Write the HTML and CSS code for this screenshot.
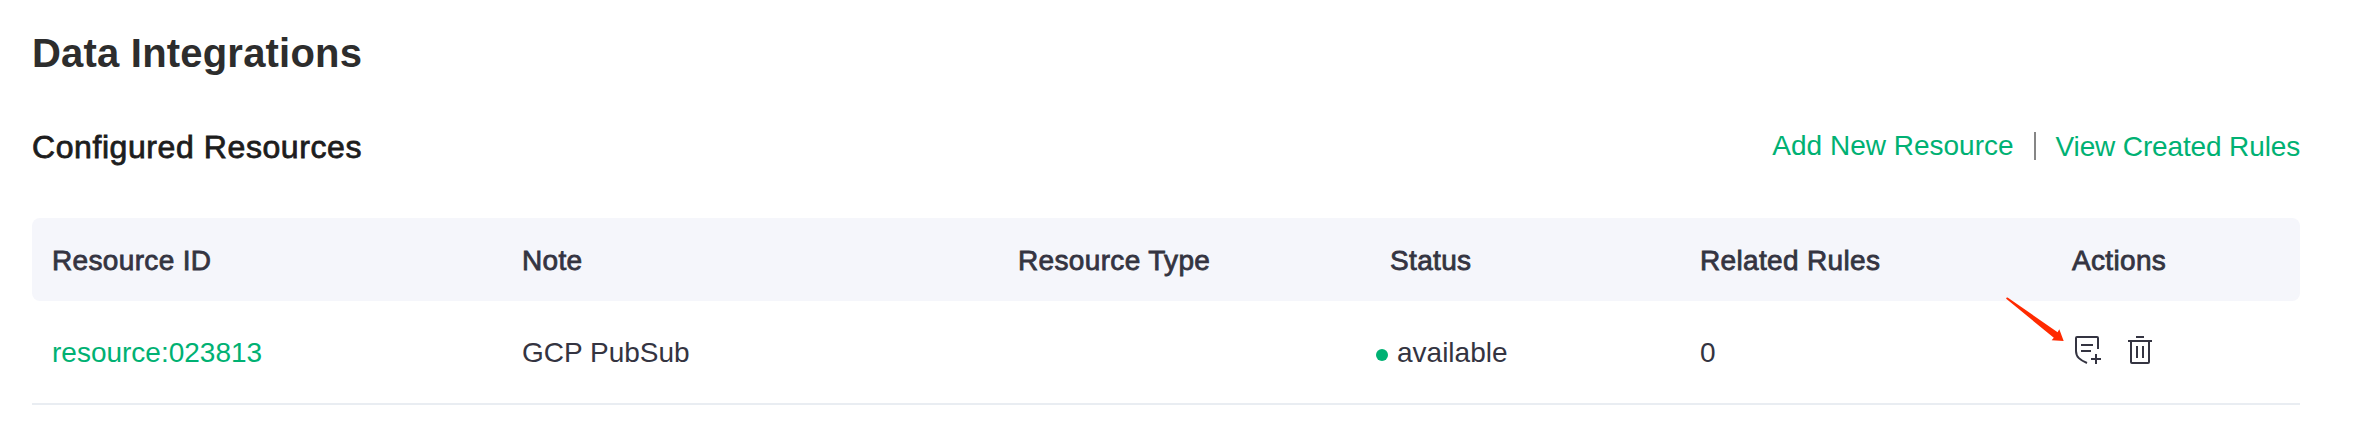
FILE: index.html
```html
<!DOCTYPE html>
<html lang="en">
<head>
<meta charset="utf-8">
<title>Data Integrations</title>
<link rel="stylesheet" href="styles.css">
</head>
<body>
<main class="page">
  <h1 class="title">Data Integrations</h1>
  <div class="section-head">
    <h2 class="subtitle">Configured Resources</h2>
    <nav class="links">
      <a class="link">Add New Resource</a>
      <span class="divider"></span>
      <a class="link link-view">View Created Rules</a>
    </nav>
  </div>
  <section class="table">
    <div class="row head">
      <div class="cell">Resource ID</div>
      <div class="cell">Note</div>
      <div class="cell">Resource Type</div>
      <div class="cell">Status</div>
      <div class="cell">Related Rules</div>
      <div class="cell">Actions</div>
    </div>
    <div class="row body">
      <div class="cell"><a class="link">resource:023813</a></div>
      <div class="cell">GCP PubSub</div>
      <div class="cell"></div>
      <div class="cell status"><span class="dot"></span>available</div>
      <div class="cell">0</div>
      <div class="cell actions">
        <svg class="icon" width="28" height="30" viewBox="0 0 28 30">
          <path d="M24 14V3Q24 2 23 2H3Q2 2 2 3V16C2 22 6 25 13 28M7 10H19M7 16H17M17 24H27M22 19V29"/>
        </svg>
        <svg class="icon" width="24" height="30" viewBox="0 0 24 30">
          <path d="M8 2H16M0 6H24M3 6V27Q3 28 4 28H20Q21 28 21 27V6M9 11V23M15 11V23"/>
        </svg>
        <svg class="arrow" width="60" height="46" viewBox="0 0 60 46">
          <path d="M1.6 .4Q0 .2 .2 1.8L47.8 40.8L45.7 43.3L57.7 43.9L53.3 32.2L51.6 35.2Z"/>
        </svg>
      </div>
    </div>
  </section>
</main>
</body>
</html>
```
FILE: styles.css
```css
body {
  margin: 0;
  background: #fff;
  font-family: "Liberation Sans", Arial, sans-serif;
  font-size: 28px;
  line-height: 32px;
  color: #343441;
}
.page { padding: 29px 64px 0 32px; }
.title {
  margin: 0;
  font-size: 40px;
  line-height: 48px;
  font-weight: 700;
  letter-spacing: .2px;
  color: #2d2d2d;
}
.section-head {
  display: flex;
  justify-content: space-between;
  margin-top: 50px;
  height: 91px;
}
.subtitle {
  margin: 0;
  font-size: 32px;
  line-height: 40px;
  font-weight: 400;
  letter-spacing: .58px;
  color: #1d1d1d;
  -webkit-text-stroke: .8px currentColor;
}
.links {
  display: flex;
  align-items: flex-start;
  padding-top: 3px;
}
.link { color: #00b173; }
.link-view {
  padding-top: 1px;
  letter-spacing: -.14px;
}
.divider {
  width: 2px;
  height: 28px;
  margin: 2px 20px 0;
  background: #868686;
}
.row {
  display: grid;
  grid-template-columns: 470px 496px 372px 310px 372px 1fr;
  align-items: center;
}
.cell { padding-left: 20px; white-space: nowrap; }
.head {
  height: 83px;
  background: #f5f6fb;
  border-radius: 8px;
  letter-spacing: .34px;
  -webkit-text-stroke: .8px currentColor;
}
.head .cell { padding-top: 2px; }
.body {
  height: 102px;
  border-bottom: 2px solid #e9edf2;
}
.body .cell { padding-top: 2px; }
.body .status { display: flex; align-items: center; padding-left: 6px; }
.dot {
  width: 12px;
  height: 12px;
  margin: 4px 9px 0 0;
  border-radius: 50%;
  background: #00b173;
}
.body .actions {
  position: relative;
  display: flex;
  align-items: center;
  gap: 26px;
  padding: 0 0 4px 22px;
}
.icon {
  fill: none;
  stroke: #343441;
  stroke-width: 2;
}
.arrow {
  position: absolute;
  left: -46px;
  top: -38px;
  fill: #ff2a00;
}
```
